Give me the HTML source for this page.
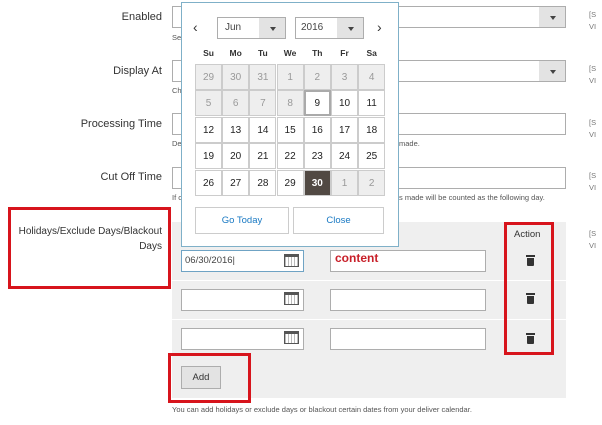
<!DOCTYPE html>
<html><head><style>
*{box-sizing:border-box;margin:0;padding:0}
body{width:602px;height:425px;overflow:hidden;background:#fff;font-family:"Liberation Sans",sans-serif;color:#333;position:relative}
.a{position:absolute}
.lbl{font-size:11px;text-align:right;width:162px;left:0;color:#333}
.inp{border:1px solid #adadad;background:#fff;height:22px}
.sel:after{content:"";position:absolute;right:0;top:0;width:26px;height:20px;background:#e3e3e3}
.arr{position:absolute;right:9px;top:9px;border:3.5px solid transparent;border-top:4px solid #444;z-index:2}
.note{font-size:7.5px;color:#555}
.side{font-size:7.5px;color:#777;left:589px;line-height:12px}
.cell{position:absolute;width:27px;height:26px;border:1px solid #ccc;font-size:10px;text-align:center;line-height:25px;color:#222;background:#fff}
.g{background:#eee;color:#999}
.red{border:3px solid #d7141c}
.trash{width:7px;height:8px;background:#333;border-radius:0 0 1px 1px}
.trash:before{content:"";position:absolute;left:-1px;top:-3px;width:9px;height:2px;background:#333}
.cal{width:15px;height:13px;border:1px solid #555;background:repeating-linear-gradient(90deg,#bbb 0 1px,#fff 1px 3px);border-top:3px solid #555}
</style></head><body>

<div class="a lbl" style="top:11px">Enabled</div>
<div class="a lbl" style="top:65px">Display At</div>
<div class="a lbl" style="top:118px">Processing Time</div>
<div class="a lbl" style="top:171px">Cut Off Time</div>

<div class="a inp sel" style="left:172px;top:6px;width:394px"><span class="arr"></span></div>
<div class="a inp sel" style="left:172px;top:60px;width:394px"><span class="arr"></span></div>
<div class="a inp" style="left:172px;top:113px;width:394px"></div>
<div class="a inp" style="left:172px;top:167px;width:394px"></div>
<div class="a note" style="left:172px;top:33px">Se</div>
<div class="a note" style="left:172px;top:86px">Ch</div>
<div class="a note" style="left:172px;top:139px">De</div>
<div class="a note" style="left:399px;top:139px">made.</div>
<div class="a note" style="left:172px;top:193px">If c</div>
<div class="a note" style="left:399px;top:193px">s made will be counted as the following day.</div>

<div class="a side" style="top:9px">[S<br>VI</div>
<div class="a side" style="top:63px">[S<br>VI</div>
<div class="a side" style="top:117px">[S<br>VI</div>
<div class="a side" style="top:170px">[S<br>VI</div>
<div class="a side" style="top:228px">[S<br>VI</div>

<div class="a" style="left:172px;top:222px;width:394px;height:176px;background:#efefef"></div>
<div class="a" style="left:172px;top:280px;width:394px;height:1px;background:#fff"></div>
<div class="a" style="left:172px;top:319px;width:394px;height:1px;background:#fff"></div>
<div class="a" style="left:514px;top:229px;font-size:9.5px;color:#333">Action</div>

<div class="a inp" style="left:181px;top:250px;width:123px;border-color:#6fa3c4;font-size:9.5px;padding:4px 3px;color:#444">06/30/2016|</div>
<div class="a inp" style="left:181px;top:289px;width:123px"></div>
<div class="a inp" style="left:181px;top:328px;width:123px"></div>
<div class="a cal" style="left:284px;top:254px"></div>
<div class="a cal" style="left:284px;top:292px"></div>
<div class="a cal" style="left:284px;top:331px"></div>

<div class="a inp" style="left:330px;top:250px;width:156px"></div>
<div class="a inp" style="left:330px;top:289px;width:156px"></div>
<div class="a inp" style="left:330px;top:328px;width:156px"></div>
<div class="a" style="left:335px;top:251px;font-size:12px;font-weight:bold;color:#c8202a">content</div>

<div class="a trash" style="left:527px;top:258px"></div>
<div class="a trash" style="left:527px;top:296px"></div>
<div class="a trash" style="left:527px;top:336px"></div>

<div class="a" style="left:181px;top:366px;width:40px;height:23px;background:#e3e3e3;border:1px solid #adadad;font-size:9.5px;text-align:center;line-height:21px">Add</div>
<div class="a note" style="left:172px;top:405px">You can add holidays or exclude days or blackout certain dates from your deliver calendar.</div>

<div class="a lbl" style="top:224px;line-height:15px;font-size:10px">Holidays/Exclude Days/Blackout<br>Days</div>

<div class="a red" style="left:8px;top:207px;width:163px;height:82px"></div>
<div class="a red" style="left:504px;top:222px;width:50px;height:133px"></div>
<div class="a red" style="left:168px;top:353px;width:83px;height:50px"></div>

<div class="a" style="left:181px;top:2px;width:218px;height:245px;background:#fff;border:1px solid #7fb0c8"></div>
<div class="a" style="left:193px;top:19px;font-size:14px;color:#333">&#8249;</div>
<div class="a" style="left:377px;top:19px;font-size:14px;color:#333">&#8250;</div>
<div class="a inp sel" style="left:217px;top:17px;width:69px;font-size:10px;padding:4px 7px;color:#444">Jun<span class="arr"></span></div>
<div class="a inp sel" style="left:295px;top:17px;width:69px;font-size:10px;padding:4px 5px;color:#444">2016<span class="arr"></span></div>
<div id="wd"></div>
<div id="grid"></div>
<div class="a" style="left:195px;top:207px;width:94px;height:27px;border:1px solid #ccc;font-size:9.5px;color:#1979c3;text-align:center;line-height:25px">Go Today</div>
<div class="a" style="left:293px;top:207px;width:91px;height:27px;border:1px solid #ccc;font-size:9.5px;color:#1979c3;text-align:center;line-height:25px">Close</div>

<script>
var wd=["Su","Mo","Tu","We","Th","Fr","Sa"],h="";
for(var i=0;i<7;i++)h+='<div class="a" style="left:'+(195+i*27.2)+'px;top:48px;width:27px;text-align:center;font-size:8.5px;font-weight:bold;color:#333">'+wd[i]+'</div>';
var d=[[29,30,31,1,2,3,4],[5,6,7,8,9,10,11],[12,13,14,15,16,17,18],[19,20,21,22,23,24,25],[26,27,28,29,30,1,2]];
for(var r=0;r<5;r++)for(var c=0;c<7;c++){
 var cls="cell",st="";
 if(r==0||(r==1&&c<4)||(r==4&&c>4))cls+=" g";
 if(r==1&&c==4)st="border:2px solid #aaa;line-height:23px;";
 if(r==4&&c==4)st="background:#514943;color:#fff;font-weight:bold;";
 h+='<div class="'+cls+'" style="left:'+(195+c*27.2)+'px;top:'+(64+r*26.4)+'px;'+st+'">'+d[r][c]+'</div>';}
document.getElementById("grid").outerHTML=h;
</script>
</body></html>
